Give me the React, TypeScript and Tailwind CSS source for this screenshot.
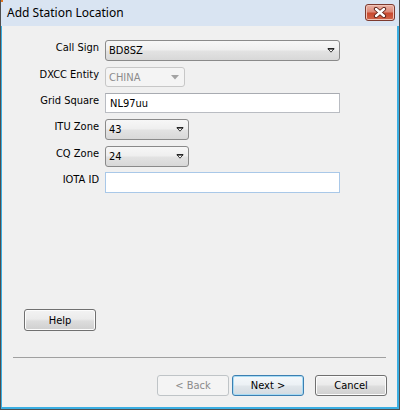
import React from "react";

const ui = "font-['DejaVu_Sans_Condensed','DejaVu_Sans',sans-serif] font-stretch-condensed text-[11px] leading-[13px]";

function Arrow({ disabled }: { disabled?: boolean }) {
  if (disabled) {
    return (
      <svg width="8" height="5" viewBox="0 0 8 5" className="shrink-0">
        <polygon points="0,0 8,0 4,4.5" fill="#a3a3a3" />
      </svg>
    );
  }
  return (
    <svg width="8" height="5" viewBox="0 0 8 5" className="shrink-0">
      <polygon points="1,0.8 7,0.8 4,4.2" fill="#ffffff" stroke="#2a2a2a" strokeWidth="0.9" strokeLinejoin="round" />
      <line x1="0.8" y1="0.8" x2="7.2" y2="0.8" stroke="#111" strokeWidth="1.2" />
    </svg>
  );
}

function Combo({ value, width }: { value: string; width: string }) {
  return (
    <div
      className={`${width} h-[21px] flex items-center justify-between pl-[3px] pr-[4px] rounded-[3px] border border-[#8a8a8a] bg-[linear-gradient(to_bottom,#f7f7f7_0%,#efefef_45%,#e2e2e2_55%,#d8d8d8_100%)] text-black`}
    >
      <span>{value}</span>
      <Arrow />
    </div>
  );
}

function Row({ label, children, mt }: { label: string; children: React.ReactNode; mt: string }) {
  return (
    <div className={`flex items-start ${mt}`}>
      <div className="w-[97px] text-right pt-[1px] text-black">{label}</div>
      <div className="ml-[6px]">{children}</div>
    </div>
  );
}

function Button({ children, disabled, isDefault, className = "" }: { children: React.ReactNode; disabled?: boolean; isDefault?: boolean; className?: string }) {
  let cls =
    "w-[72px] h-[21px] flex items-center justify-center rounded-[3px] border ";
  if (disabled) {
    cls += "border-[#bfc4c7] bg-[#f4f4f4] text-[#8b8b8b]";
  } else if (isDefault) {
    cls +=
      "border-[#3c7fb1] bg-[linear-gradient(to_bottom,#f4f8fb_0%,#ecf1f5_45%,#dfe5ea_55%,#d3dbe1_100%)] shadow-[inset_0_0_0_1px_#a8dbf4] text-black";
  } else {
    cls +=
      "border-[#707070] bg-[linear-gradient(to_bottom,#f3f3f3_0%,#ebebeb_45%,#dddddd_55%,#cfcfcf_100%)] shadow-[inset_0_0_0_1px_#fcfcfc] text-black";
  }
  return <div className={`${cls} ${className}`}>{children}</div>;
}

export default function App() {
  return (
    <div className="w-[400px] h-[410px] flex flex-col bg-[#d9e4f2] border-l border-r border-b border-[#4e4e4e] overflow-hidden relative">
      <div className="absolute left-[-1px] top-0 w-[3px] h-[2px] bg-[#e0741f]" />
      {/* Title bar */}
      <div className="h-[26px] shrink-0 flex items-start justify-between bg-[#d9e4f2]">
        <div className="pl-[6px] pt-[5px] font-['Noto_Sans',sans-serif] text-[12px] leading-[16px] text-black">
          Add Station Location
        </div>
        <div className="mt-[4px] mr-[4px] w-[30px] h-[17px] rounded-[3px] border border-[#7d3a2f] bg-[linear-gradient(to_bottom,#eab2a6_0%,#dd8a79_45%,#c9492f_55%,#d0654b_100%)] shadow-[inset_0_0_0_1px_#f0c4b8] flex items-center justify-center">
          <svg width="14" height="11" viewBox="0 0 14 11">
            <path d="M3 2 L11 9 M11 2 L3 9" stroke="#5a1f16" strokeWidth="4.2" strokeLinecap="round" />
            <path d="M3 2 L11 9 M11 2 L3 9" stroke="#ffffff" strokeWidth="2.4" strokeLinecap="round" />
          </svg>
        </div>
      </div>

      {/* Client */}
      <div className={`flex-1 flex flex-col bg-[#f0f0f0] border-l border-r-2 border-b-2 border-[#3aaee2] ${ui}`}>
        <div className="pt-[14px]">
          <Row label="Call Sign" mt="mt-0">
            <Combo value="BD8SZ" width="w-[235px]" />
          </Row>
          <Row label="DXCC Entity" mt="mt-[6px]">
            <div className="w-[80px] h-[20px] flex items-center justify-between pl-[3px] pr-[5px] rounded-[3px] border border-[#c7c7c7] bg-[#f4f4f4] text-[#8c8c8c]">
              <span>CHINA</span>
              <Arrow disabled />
            </div>
          </Row>
          <Row label="Grid Square" mt="mt-[6px]">
            <div className="w-[235px] h-[20px] flex items-center pl-[4px] border border-[#b9bcc2] border-t-[#a8abb1] bg-white text-black">
              NL97uu
            </div>
          </Row>
          <Row label="ITU Zone" mt="mt-[6px]">
            <Combo value="43" width="w-[84px]" />
          </Row>
          <Row label="CQ Zone" mt="mt-[6px]">
            <Combo value="24" width="w-[84px]" />
          </Row>
          <Row label="IOTA ID" mt="mt-[5px]">
            <div className="w-[235px] h-[21px] border border-[#a9c8e8] bg-white" />
          </Row>
        </div>

        <div className="mt-[116px] ml-[22px]">
          <Button className="h-[22px]">Help</Button>
        </div>

        <div className="mt-[26px] ml-[11px] w-[373px] h-px bg-[#a0a0a0]" />

        <div className="mt-[17px] flex justify-end pr-[10px]">
          <Button disabled>&lt; Back</Button>
          <Button isDefault className="ml-[3px]">Next &gt;</Button>
          <Button className="ml-[11px]">Cancel</Button>
        </div>
      </div>
    </div>
  );
}
